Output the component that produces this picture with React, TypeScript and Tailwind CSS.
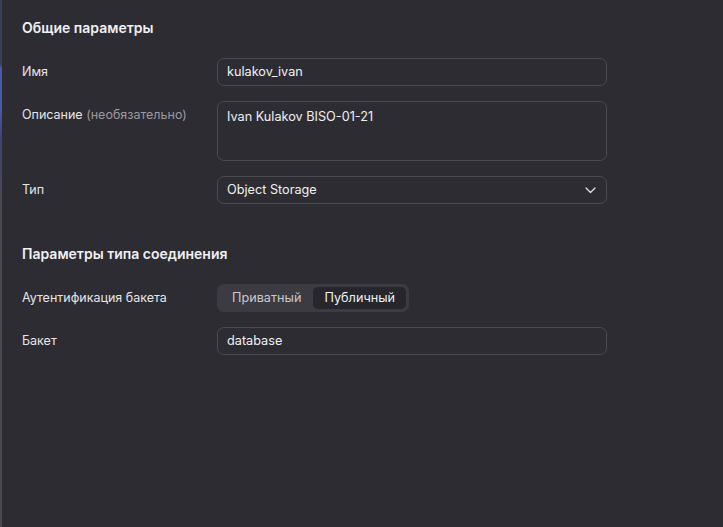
import React from "react";

function Row({ label, children, top }: { label: React.ReactNode; children: React.ReactNode; top?: boolean }) {
  return (
    <div className={`flex ${top ? "items-start" : "items-center"}`}>
      <div className={`w-[195px] text-[12.5px] text-[#e6e6e8] ${top ? "pt-[5px]" : ""}`}>{label}</div>
      {children}
    </div>
  );
}

function Input({ value }: { value: string }) {
  return (
    <div className="w-[390px] h-[28px] rounded-[7px] border border-[#4b4a51] px-[9px] flex items-center text-[12.7px] text-[#f0f0f2]">
      {value}
    </div>
  );
}

export default function App() {
  return (
    <div
      className="w-[723px] h-[527px] bg-[#2d2c33] flex overflow-hidden"
      style={{ fontFamily: "Inter, 'Noto Sans', sans-serif" }}
    >
      <div className="w-[2px] h-full bg-[linear-gradient(to_bottom,#3a3f5a_0px,#3a3f5a_64px,#4a5aa8_68px,#4a5aa8_108px,#3d4470_140px,#4a4a52_200px,#4a4a52_100%)]" />
      <div className="flex-1 pl-[20px] pt-[18px]">
        <div className="text-[14px] font-semibold text-[#f0f0f2] leading-[20px]">Общие параметры</div>
        <div className="mt-[20px] flex flex-col gap-[15px]">
          <Row label="Имя">
            <Input value="kulakov_ivan" />
          </Row>
          <Row
            top
            label={
              <span>
                Описание <span className="text-[#9b9aa1]">(необязательно)</span>
              </span>
            }
          >
            <div className="w-[390px] h-[60px] rounded-[7px] border border-[#4b4a51] px-[9px] pt-[5px] text-[12.7px] text-[#f0f0f2]">
              Ivan Kulakov BISO-01-21
            </div>
          </Row>
          <Row label="Тип">
            <div className="w-[390px] h-[28px] rounded-[7px] border border-[#4b4a51] pl-[9px] pr-[10px] flex items-center justify-between text-[12.7px] text-[#f0f0f2]">
              <span>Object Storage</span>
              <svg width="11" height="7" viewBox="0 0 11 7" fill="none">
                <path d="M1 1l4.5 4.5L10 1" stroke="#e6e6e8" strokeWidth="1.2" strokeLinecap="round" strokeLinejoin="round" />
              </svg>
            </div>
          </Row>
        </div>
        <div className="mt-[40px] text-[14px] font-semibold text-[#f0f0f2] leading-[20px]">Параметры типа соединения</div>
        <div className="mt-[20px] flex flex-col gap-[15px]">
          <Row label="Аутентификация бакета">
            <div className="h-[28px] rounded-[7px] bg-[#3c3b42] p-[3px] flex items-stretch text-[12.7px]">
              <div className="px-[12px] flex items-center text-[#c9c8ce]">Приватный</div>
              <div className="px-[11px] flex items-center rounded-[5px] bg-[#27262c] text-[#f0f0f2]">Публичный</div>
            </div>
          </Row>
          <Row label="Бакет">
            <Input value="database" />
          </Row>
        </div>
      </div>
    </div>
  );
}
